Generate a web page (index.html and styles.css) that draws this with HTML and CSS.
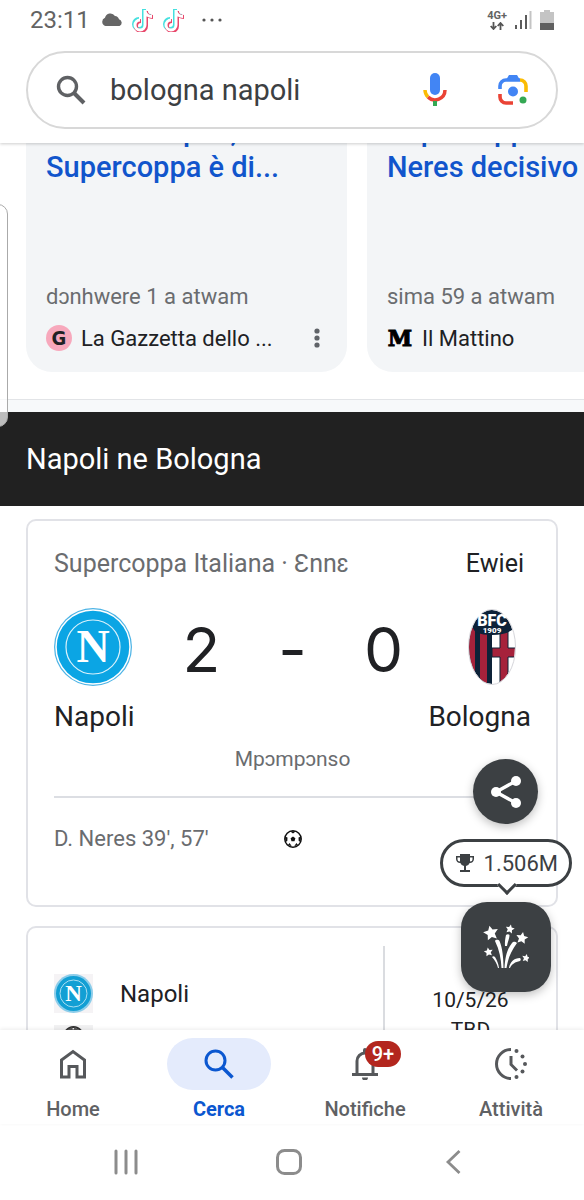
FILE: index.html
```html
<!DOCTYPE html>
<html lang="it">
<head>
  <meta charset="UTF-8">
  <meta name="viewport" content="width=device-width, initial-scale=1.0">
  <title>bologna napoli</title>
  <link rel="stylesheet" href="styles.css">
</head>
<body>
  <header class="top">
    <div class="status">
      <span class="clock">23:11</span>
      <svg class="cloud" width="22" height="14" viewBox="0 0 22 14"><path d="M4.500 13A4.300 4.300 0 0 1 4 4.800 5.500 5.500 0 0 1 14 3a4.500 4.500 0 0 1 4 3.200 3.600 3.600 0 0 1 .5 6.800z" fill="#666"/></svg>
      <svg width="22" height="24" viewBox="0 0 22 24">
        <g fill="none" stroke-width="4">
          <path d="M12 1v15a5 5 0 1 1-5-5M12 2c.5 4 3.500 6 7 6" stroke="#45e0df"/>
          <path d="M14 3v15a5 5 0 1 1-5-5M14 4c.5 3 3.500 5 7 5" stroke="#e8476b"/>
          <path d="M13 2v15a5 5 0 1 1-5-5M13 3c.5 3.500 3.500 5.500 7 5.500" stroke="#fff" stroke-width="3"/>
        </g>
      </svg>
      <svg width="22" height="24" viewBox="0 0 22 24">
        <g fill="none" stroke-width="4">
          <path d="M12 1v15a5 5 0 1 1-5-5M12 2c.5 4 3.500 6 7 6" stroke="#45e0df"/>
          <path d="M14 3v15a5 5 0 1 1-5-5M14 4c.5 3 3.500 5 7 5" stroke="#e8476b"/>
          <path d="M13 2v15a5 5 0 1 1-5-5M13 3c.5 3.500 3.500 5.500 7 5.500" stroke="#fff" stroke-width="3"/>
        </g>
      </svg>
      <svg class="more" width="20" height="4" viewBox="0 0 20 4" fill="#555"><circle cx="2" cy="2" r="1.600"/><circle cx="10" cy="2" r="1.600"/><circle cx="18" cy="2" r="1.600"/></svg>
      <div class="signal">
        <div class="net">
          <span>4G+</span>
          <svg width="14" height="8" viewBox="0 0 14 8" fill="none" stroke="#555" stroke-width="1.800"><path d="M3.500 0v7M.7 4l2.800 3 2.800-3M10.500 8V1M7.700 4l2.800-3 2.800 3"/></svg>
        </div>
        <svg width="17" height="19" viewBox="0 0 17 19"><path d="M0 15h2v4H0zM5 10h2v9H5zM10 5h2v14h-2z" fill="#5c5c5c"/><path d="M14.500 1h2v18h-2z" fill="#c4c4c4"/></svg>
        <svg width="14" height="20" viewBox="0 0 14 20"><path d="M4 0h6v2h4v18H0V2h4z" fill="#c4c4c4"/><path d="M0 13h14v7H0z" fill="#606060"/></svg>
      </div>
    </div>
    <form class="search">
      <svg width="30" height="30" viewBox="0 0 30 30" fill="none" stroke="#5f6164" stroke-width="3.400"><circle cx="11.500" cy="11.500" r="9"/><path d="M18 18l10 10" stroke-width="4"/></svg>
      <input type="text" value="bologna napoli" aria-label="Cerca">
      <button type="button" aria-label="Ricerca vocale">
        <svg width="24" height="34" viewBox="0 0 24 34" fill="none" stroke-width="4">
          <rect x="7" y="0" width="10" height="22" rx="5" fill="#4285f4"/>
          <path d="M2 17a10 10 0 0 0 3 7" stroke="#fbbc04" stroke-width="3.500"/>
          <path d="M5 24a10 10 0 0 0 17-7" stroke="#ea4335" stroke-width="3.500"/>
          <path d="M12 28v5" stroke="#34a853"/>
        </svg>
      </button>
      <button type="button" aria-label="Google Lens">
        <svg width="30" height="30" viewBox="0 0 30 30" fill="none" stroke-width="3.600">
          <path d="M2 14v-3a6 6 0 0 1 6-6h14" stroke="#4285f4"/>
          <path d="M8 5l3-5h8l3 5z" fill="#4285f4"/>
          <path d="M22 5a6 6 0 0 1 6 6v6" stroke="#fbbc04"/>
          <path d="M2 19v3a6 6 0 0 0 6 6h7" stroke="#ea4335"/>
          <circle cx="15" cy="16.500" r="5" fill="#4285f4"/>
          <circle cx="25" cy="25" r="3.500" fill="#34a853"/>
        </svg>
      </button>
    </form>
  </header>

  <main class="results">
    <section class="news">
      <article class="story">
        <a class="title" href="#">Trionfo Napoli, la<br>Supercoppa è di...</a>
        <p class="time">dɔnhwere 1 a atwam</p>
        <div class="source">
          <span class="badge gazzetta">G</span>
          <span>La Gazzetta dello ...</span>
          <button class="menu" type="button" aria-label="Altro">
            <svg width="6" height="20" viewBox="0 0 6 20" fill="#5f6368"><circle cx="3" cy="3" r="2.600"/><circle cx="3" cy="10" r="2.600"/><circle cx="3" cy="17" r="2.600"/></svg>
          </button>
        </div>
      </article>
      <article class="story">
        <a class="title" href="#">Supercoppa<br>Neres decisivo</a>
        <p class="time">sima 59 a atwam</p>
        <div class="source">
          <span class="badge mattino">M</span>
          <span>Il Mattino</span>
        </div>
      </article>
    </section>

    <h1 class="heading">Napoli ne Bologna</h1>

    <section class="card match">
      <div class="info">
        <span class="league">Supercoppa Italiana · Ɛnnɛ</span>
        <span>Ewiei</span>
      </div>
      <div class="score">
        <svg class="crest" viewBox="0 0 78 78">
          <circle cx="39" cy="39" r="39" fill="#4db4e6"/>
          <circle cx="39" cy="39" r="37" fill="#0ba5e4" stroke="#fff" stroke-width="1.500"/>
          <circle cx="39" cy="39" r="27" fill="none" stroke="#d9f1fb" stroke-width="1.200"/>
          <text class="crest-n" x="39" y="54" text-anchor="middle">N</text>
        </svg>
        <div class="goals"><span>2</span><span>-</span><span>0</span></div>
        <svg class="crest" viewBox="0 0 78 78">
          <defs><clipPath id="oval"><ellipse cx="39" cy="39" rx="23" ry="37"/></clipPath></defs>
          <g clip-path="url(#oval)">
            <path d="M15 0h24v78H15z" fill="#0d2238"/>
            <path d="M15 20h7v58h-7zM27 20h7v58h-7z" fill="#a6223b"/>
            <path d="M39 20h24v58H39z" fill="#fff"/>
            <path d="M47 20h8v20h8v9h-8v29h-8V49h-8v-9h8z" fill="#a6223b" stroke="#0d2238"/>
            <path d="M15 0h48v16q-4 11-24 11T20 18L15 20z" fill="#0d2238"/>
          </g>
          <ellipse cx="39" cy="39" rx="23.500" ry="37.500" fill="none" stroke="#d5d5da"/>
          <text class="crest-bfc" x="39" y="18" text-anchor="middle">BFC</text>
          <text class="crest-year" x="39" y="25" text-anchor="middle">1909</text>
        </svg>
      </div>
      <div class="teams"><span>Napoli</span><span>Bologna</span></div>
      <p class="round">Mpɔmpɔnso</p>
      <div class="scorers">
        <span>D. Neres 39', 57'</span>
        <svg width="18" height="18" viewBox="0 0 18 18">
          <circle cx="9" cy="9" r="8.200" fill="#fff" stroke="#111" stroke-width="1.500"/>
          <path d="M9 6.500l2.400 1.800-.9 2.900h-3l-.9-2.900zM6 1.200h6L9 3.600zM1 6.500l2.500 1L3.300 11 1.600 12zM17 6.500l-2.500 1 .2 3.500 1.700 1zM4 15l1.600-2 2.200 3.300zM14 15l-1.600-2-2.200 3.300z" fill="#111"/>
        </svg>
        <span></span>
      </div>
    </section>

    <section class="card fixture">
      <div class="sides">
        <div class="side">
          <svg class="mini" viewBox="0 0 78 78">
            <path d="M0 0h78v78H0z" fill="#f5f3f5"/>
            <circle cx="39" cy="39" r="39" fill="#8ccdea"/>
            <circle cx="39" cy="39" r="35" fill="#129fd4"/>
            <circle cx="39" cy="39" r="27" fill="none" stroke="#a9def2" stroke-width="2"/>
            <text class="crest-n" x="39" y="54" text-anchor="middle">N</text>
          </svg>
          <span>Napoli</span>
        </div>
        <div class="side">
          <svg class="mini" viewBox="0 0 39 39">
            <path d="M0 0h39v39H0z" fill="#f1f1f2"/>
            <ellipse cx="19.500" cy="19" rx="12" ry="17" fill="#fff" stroke="#333" stroke-width="2"/>
            <path d="M13 5l5-3 1 3 2-3 5 4-2 6h-9z" fill="#555"/>
          </svg>
        </div>
      </div>
      <div class="when"><span>10/5/26</span><span>TBD</span></div>
    </section>

    <div class="edge-panel"></div>

    <div class="floating">
      <button class="share" type="button" aria-label="Condividi">
        <svg width="32" height="34" viewBox="0 0 32 34" fill="#fff"><path d="M26 6L6 17l20 11" fill="none" stroke="#fff" stroke-width="3.400"/><circle cx="26" cy="6" r="5"/><circle cx="6" cy="17" r="5"/><circle cx="26" cy="28" r="5"/></svg>
      </button>
      <div class="count">
        <svg width="18" height="18" viewBox="0 0 18 18"><path d="M4 0h10v2h4v3a4 4 0 0 1-4.300 4A5 5 0 0 1 10 12v4h4v2H4v-2h4v-4a5 5 0 0 1-3.700-3A4 4 0 0 1 0 5V2h4zM4 3.500H1.500V5A2.500 2.500 0 0 0 4 7.500zM14 3.500v4A2.500 2.500 0 0 0 16.500 5V3.500z" fill="#3c4043" fill-rule="evenodd"/></svg>
        <span>1.506M</span>
      </div>
      <button class="cheer" type="button" aria-label="Festeggia">
        <svg width="46" height="46" viewBox="0 0 46 46" fill="#fff">
          <defs><path id="star" d="M0-7.500l2.200 4.500 5.300.6-3.900 3.600 1 5.300L0 4.200l-4.600 2.300 1-5.300-3.900-3.600 5.300-.6z"/></defs>
          <use href="#star" transform="translate(8 9) rotate(-12)"/>
          <use href="#star" transform="translate(39 14) rotate(10) scale(.8)"/>
          <use href="#star" transform="translate(27 5) rotate(12) scale(.6)"/>
          <use href="#star" transform="translate(5.500 28) rotate(-10) scale(.6)"/>
          <use href="#star" transform="translate(43 34) rotate(12) scale(.55)"/>
          <path d="M12 17c1-2 4-1 4.500 0 3 7 4 17 4 27h-2c-.5-9-2-18-6.500-27z"/>
          <path d="M34 19c-2-2-4-1-5 0-5 6-7 15-7.500 25h2c1.500-9 4-16 10.500-25z"/>
          <path d="M23 11c1-1 3-1 3.500 0 0 4-2 7-2.500 11h-2c-.3-4 .2-7 1-11z"/>
          <path d="M9 33c1-1 2-1 3 0 2 3 3.500 7 4 11h-1c-1-4-3-8-6-11z"/>
          <path d="M37 34c-6 0-10 4-11 10h1c2-4 5-6 10-7 1-1 1-2 0-3z"/>
        </svg>
      </button>
    </div>
  </main>

  <nav class="tabs">
    <a href="#">
      <span class="pill"><svg width="26" height="30" viewBox="0 0 26 30" fill="none" stroke="#56585b" stroke-width="3"><path d="M1.500 28V11L13 2.500 24.500 11v17H17v-10.500H9V28z"/></svg></span>
      Home
    </a>
    <a class="active" href="#">
      <span class="pill"><svg width="30" height="30" viewBox="0 0 30 30" fill="none" stroke="#0b57d0" stroke-width="3"><circle cx="11.500" cy="11.500" r="9.500"/><path d="M18 18l10.500 10.500" stroke-width="3.600"/></svg></span>
      Cerca
    </a>
    <a href="#">
      <span class="pill">
        <svg width="26" height="32" viewBox="0 0 26 32"><path d="M5 26V13a8 8 0 0 1 16 0v13" fill="none" stroke="#56585b" stroke-width="3"/><path d="M0 25h26v3H0zM10 29.500h6a3 3 0 0 1-6 0zM11 5V2a2 2 0 0 1 4 0v3z" fill="#56585b"/></svg>
        <span class="alert">9+</span>
      </span>
      Notifiche
    </a>
    <a href="#">
      <span class="pill"><svg width="32" height="32" viewBox="0 0 32 32"><path d="M16 1.500a14.500 14.500 0 0 0 0 29M16 8v8.500l6 6" fill="none" stroke="#56585b" stroke-width="3"/><g fill="#56585b"><circle cx="21.500" cy="3" r="2"/><circle cx="27.500" cy="8.500" r="2"/><circle cx="30" cy="16" r="2"/><circle cx="27.500" cy="23.500" r="2"/><circle cx="21.500" cy="29" r="2"/></g></svg></span>
      Attività
    </a>
  </nav>

  <div class="system">
    <button type="button" aria-label="Recenti"><svg width="24" height="26" viewBox="0 0 24 26" stroke="#8c8c8c" stroke-width="3" stroke-linecap="round"><path d="M2 2v22M12 2v22M22 2v22"/></svg></button>
    <button type="button" aria-label="Home"><svg width="26" height="26" viewBox="0 0 26 26" fill="none" stroke="#8c8c8c" stroke-width="3"><rect x="1.500" y="1.500" width="23" height="23" rx="7"/></svg></button>
    <button type="button" aria-label="Indietro"><svg width="16" height="26" viewBox="0 0 16 26" fill="none" stroke="#8c8c8c" stroke-width="2.800"><path d="M14.500 2L3 13l11.500 11"/></svg></button>
  </div>
</body>
</html>
```

FILE: styles.css
```css
* {
  box-sizing: border-box;
}

body {
  margin: 0;
  height: 100vh;
  display: flex;
  flex-direction: column;
  font-family: Roboto, Arial, sans-serif;
  color: #202124;
  background: #fff;
}

svg {
  display: block;
  flex: none;
}

p {
  margin: 0;
}

button {
  border: 0;
  padding: 0;
  background: none;
  display: flex;
  align-items: center;
  justify-content: center;
}

a {
  text-decoration: none;
}

/* header */
.top {
  position: relative;
  z-index: 2;
  padding-bottom: 14px;
  background: #fff;
  box-shadow: 0 1px 3px rgba(0, 0, 0, 0.2);
}

.status {
  display: flex;
  align-items: center;
  gap: 9px;
  height: 39px;
  padding: 0 30px;
  color: #636363;
}

.clock {
  font-size: 24px;
}

.cloud {
  margin-left: 2px;
}

.more {
  margin-left: 8px;
}

.signal {
  display: flex;
  align-items: center;
  gap: 8px;
  margin-left: auto;
}

.net {
  display: flex;
  flex-direction: column;
  align-items: center;
  font-size: 11px;
  line-height: 12px;
  font-weight: 700;
}

.search {
  display: flex;
  align-items: center;
  gap: 24px;
  height: 78px;
  margin: 12px 26px 0;
  padding: 0 28px;
  border: 2px solid #d8d8d8;
  border-radius: 39px;
}

.search input {
  flex: 1;
  min-width: 0;
  padding: 0;
  border: 0;
  outline: 0;
  font-family: inherit;
  font-size: 29px;
  color: #3c4043;
}

.search button + button {
  margin-left: 27px;
}

/* results */
.results {
  position: relative;
  flex: 1;
  min-height: 0;
  overflow: hidden;
}

.news {
  display: flex;
  gap: 20px;
  margin-top: -32px;
  padding: 0 26px 27px;
  border-bottom: 1px solid #e2e4e7;
  overflow: hidden;
}

.story {
  flex: none;
  width: 321px;
  height: 261px;
  display: flex;
  flex-direction: column;
  padding: 2px 20px 14px;
  border-radius: 0 0 26px 26px;
  background: #f3f5f7;
}

.title {
  font-size: 29px;
  line-height: 36px;
  font-weight: 500;
  color: #1155cc;
  white-space: nowrap;
}

.time {
  margin-top: auto;
  font-size: 22px;
  line-height: 30px;
  color: #6a6c6f;
}

.source {
  display: flex;
  align-items: center;
  gap: 9px;
  margin-top: 6px;
  height: 40px;
  font-size: 22px;
}

.badge {
  width: 26px;
  height: 26px;
  line-height: 26px;
  text-align: center;
}

.gazzetta {
  border-radius: 50%;
  background: #f7a8bc;
  font-family: "Liberation Sans Narrow", "DejaVu Sans Condensed", sans-serif;
  font-size: 20px;
  font-weight: 700;
}

.mattino {
  font-family: "DejaVu Serif", serif;
  font-size: 22px;
  font-weight: 700;
  color: #000;
  -webkit-text-stroke: 1px #000;
}

.menu {
  margin-left: auto;
  width: 20px;
  height: 30px;
}

.heading {
  margin: 0;
  padding: 0 26px;
  border-top: 12px solid #f7f9fa;
  font-size: 29px;
  line-height: 94px;
  font-weight: 400;
  color: #fff;
  background: #212121;
}

.card {
  margin: 13px 26px 0;
  border: 2px solid #e1e2e7;
  border-radius: 10px;
}

.match {
  height: 388px;
  padding: 26px 25px 0 26px;
}

.info {
  display: flex;
  justify-content: space-between;
  padding-right: 7px;
  font-size: 25px;
  line-height: 34px;
}

.league {
  color: #6a6c6f;
}

.score {
  display: flex;
  align-items: center;
  margin-top: 27px;
}

.crest {
  width: 78px;
  height: 78px;
}

.crest-n {
  font: 700 46px "Liberation Serif", serif;
  fill: #fff;
}

.crest-bfc {
  font: 900 16px Roboto, sans-serif;
  fill: #fff;
}

.crest-year {
  font: 900 8px Roboto, sans-serif;
  fill: #fff;
}

.goals {
  flex: 1;
  display: grid;
  grid-template-columns: repeat(3, 1fr);
  padding: 6px 24px 0;
  text-align: center;
  font-family: Inter, sans-serif;
  font-size: 62px;
  line-height: 72px;
}

.teams {
  display: flex;
  justify-content: space-between;
  margin-top: 12px;
  font-size: 28px;
  line-height: 38px;
}

.round {
  margin-top: 8px;
  text-align: center;
  font-size: 21px;
  line-height: 30px;
  color: #6a6c6f;
}

.scorers {
  display: grid;
  grid-template-columns: 1fr 18px 1fr;
  align-items: center;
  margin-top: 22px;
  border-top: 2px solid #dcdee3;
  font-size: 22px;
  line-height: 82px;
  color: #6a6c6f;
}

.fixture {
  display: flex;
  height: 200px;
  margin-top: 19px;
  padding: 18px 0 0 26px;
}

.sides {
  flex: 1;
  padding-top: 28px;
  border-right: 2px solid #dadce0;
  font-size: 24px;
}

.side {
  display: flex;
  align-items: center;
  gap: 27px;
  margin-bottom: 12px;
}

.mini {
  width: 39px;
  height: 39px;
}

.when {
  display: flex;
  flex-direction: column;
  align-items: center;
  width: 171px;
  padding-top: 39px;
  font-size: 21px;
  line-height: 30px;
}

/* overlays */
.edge-panel {
  position: absolute;
  top: 61px;
  left: -12px;
  width: 20px;
  height: 223px;
  border: 1px solid #aaa;
  border-radius: 10px;
  background: rgba(255, 255, 255, 0.7);
}

.floating {
  position: absolute;
  right: 12px;
  bottom: 38px;
  display: flex;
  flex-direction: column;
  align-items: center;
  gap: 15px;
}

.share,
.cheer {
  background: #3c4043;
  box-shadow: 0 3px 10px rgba(0, 0, 0, 0.25);
}

.share {
  width: 65px;
  height: 65px;
  border-radius: 50%;
}

.count {
  position: relative;
  display: flex;
  align-items: center;
  gap: 10px;
  height: 48px;
  padding: 0 11px 0 13px;
  border: 3px solid #3c4043;
  border-radius: 24px;
  background: #fff;
  font-size: 22px;
  color: #3c4043;
}

.count::after {
  content: "";
  position: absolute;
  left: 50%;
  bottom: -8px;
  width: 11px;
  height: 11px;
  margin-left: -6px;
  border: solid #3c4043;
  border-width: 0 3px 3px 0;
  background: #fff;
  transform: rotate(45deg);
}

.cheer {
  width: 90px;
  height: 90px;
  border-radius: 26px;
}

/* bottom bars */
.tabs {
  position: relative;
  display: grid;
  grid-template-columns: repeat(4, 1fr);
  height: 94px;
  padding-top: 8px;
  background: #fff;
  box-shadow: 0 -1px 4px rgba(0, 0, 0, 0.08);
}

.tabs a {
  display: flex;
  flex-direction: column;
  align-items: center;
  gap: 3px;
  font-size: 20px;
  line-height: 32px;
  font-weight: 500;
  color: #5f6164;
}

.tabs .active {
  color: #0b57d0;
  font-weight: 700;
}

.pill {
  position: relative;
  display: flex;
  align-items: center;
  justify-content: center;
  width: 104px;
  height: 52px;
  border-radius: 26px;
}

.active .pill {
  background: #e4ebfc;
}

.alert {
  position: absolute;
  top: 3px;
  left: 52px;
  width: 36px;
  height: 26px;
  border-radius: 13px;
  background: #b3261e;
  color: #fff;
  font-size: 20px;
  line-height: 26px;
  text-align: center;
}

.system {
  display: grid;
  grid-template-columns: repeat(3, 1fr);
  height: 76px;
  padding: 0 49px 0 44px;
  background: #fff;
}
```
